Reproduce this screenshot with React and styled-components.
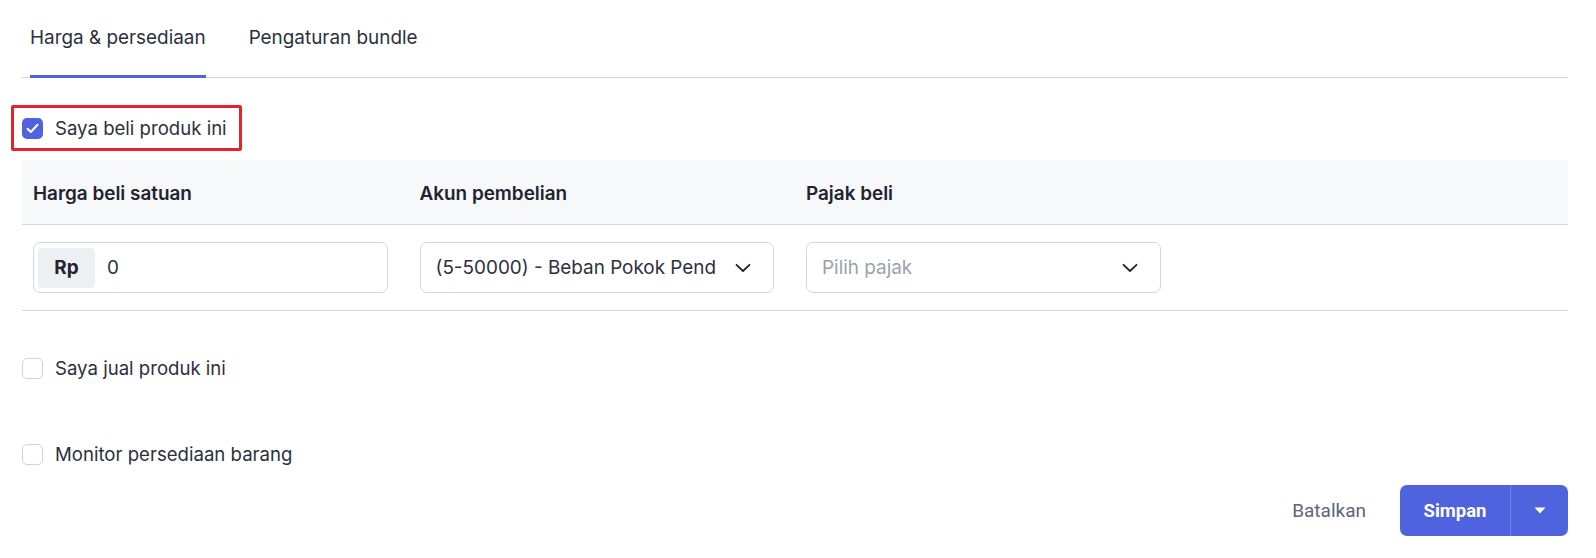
import React from "react";
import styled, { createGlobalStyle } from "styled-components";

const BLUE = "#4e63dd";
const TEXT = "#2b313c";
const LINE = "#d3d8e0";
const FS = "18.9px";

const GlobalStyle = createGlobalStyle`
  body {
    margin: 0;
    background: #ffffff;
    font-family: Inter, "Noto Sans", "Liberation Sans", sans-serif;
    color: ${TEXT};
  }
`;

const Chevron = () => (
  <svg width="16" height="10" viewBox="0 0 16 10" fill="none">
    <path d="M1.5 1.8 L8 8 L14.5 1.8" stroke="#1f2430" strokeWidth="1.8" strokeLinecap="round" strokeLinejoin="round" />
  </svg>
);

const Check = () => (
  <svg width="13" height="11" viewBox="0 0 13 11" fill="none">
    <path d="M1.5 5.8 L4.8 9 L11.5 1.8" stroke="#fff" strokeWidth="2" strokeLinecap="round" strokeLinejoin="round" />
  </svg>
);

const App = () => {
  return (
    <>
      <GlobalStyle />
      <Page>
        <Tabs>
          <Tab active>Harga &amp; persediaan</Tab>
          <Tab>Pengaturan bundle</Tab>
        </Tabs>

        <Highlight>
          <CheckBox checked>
            <Check />
          </CheckBox>
          <CheckLabel>Saya beli produk ini</CheckLabel>
        </Highlight>

        <Table>
          <HeadRow>
            <HeadCell>Harga beli satuan</HeadCell>
            <HeadCell>Akun pembelian</HeadCell>
            <HeadCell>Pajak beli</HeadCell>
            <HeadCell />
          </HeadRow>
          <BodyRow>
            <Cell>
              <Field>
                <Addon>Rp</Addon>
                <FieldText>0</FieldText>
              </Field>
            </Cell>
            <Cell>
              <Field>
                <FieldText>(5-50000) - Beban Pokok Pend</FieldText>
                <Chevron />
              </Field>
            </Cell>
            <Cell>
              <Field>
                <FieldText placeholder>Pilih pajak</FieldText>
                <Chevron />
              </Field>
            </Cell>
            <Cell />
          </BodyRow>
        </Table>

        <OptionRow top={45}>
          <CheckBox />
          <CheckLabel>Saya jual produk ini</CheckLabel>
        </OptionRow>
        <OptionRow top={62}>
          <CheckBox />
          <CheckLabel>Monitor persediaan barang</CheckLabel>
        </OptionRow>

        <Footer>
          <CancelButton>Batalkan</CancelButton>
          <SplitButton>
            <SaveButton>Simpan</SaveButton>
            <CaretButton>
              <svg width="12" height="7" viewBox="0 0 12 7">
                <path d="M0.5 0.5 L11.5 0.5 L6 6.5 Z" fill="#fff" />
              </svg>
            </CaretButton>
          </SplitButton>
        </Footer>
      </Page>
    </>
  );
};

export default App;

const Page = styled.div`
  width: 1546px;
  padding: 0 28px 0 22px;
  display: flex;
  flex-direction: column;
`;

const Tabs = styled.div`
  display: flex;
  align-items: flex-end;
  gap: 43px;
  height: 77px;
  padding-left: 8px;
  border-bottom: 1px solid ${LINE};
`;

const Tab = styled.div`
  display: flex;
  align-items: center;
  height: 78px;
  margin-bottom: -1px;
  padding-bottom: 1px;
  box-sizing: border-box;
  font-size: ${FS};
  color: ${TEXT};
  border-bottom: 3px solid ${(p) => (p.active ? BLUE : "transparent")};
`;

const Highlight = styled.div`
  display: flex;
  align-items: center;
  gap: 12px;
  align-self: flex-start;
  margin: 27px 0 0 -11px;
  height: 46px;
  box-sizing: border-box;
  padding: 0 12px 0 8px;
  border: 3px solid #e8222b;
  border-radius: 2px;
`;

const CheckBox = styled.div`
  width: 21px;
  height: 21px;
  box-sizing: border-box;
  border-radius: 5px;
  display: flex;
  align-items: center;
  justify-content: center;
  background: ${(p) => (p.checked ? BLUE : "#fff")};
  border: ${(p) => (p.checked ? "none" : "1.5px solid #cfd5de")};
`;

const CheckLabel = styled.span`
  font-size: 18.6px;
  color: ${TEXT};
`;

const Table = styled.div`
  margin-top: 9px;
  display: flex;
  flex-direction: column;
`;

const HeadRow = styled.div`
  display: grid;
  grid-template-columns: repeat(4, 1fr);
  height: 64px;
  background: #f7f8fa;
  border-bottom: 1px solid ${LINE};
`;

const HeadCell = styled.div`
  display: flex;
  align-items: center;
  padding: 3px 21px 0 11px;
  font-size: ${FS};
  font-weight: 600;
  color: #1f2430;
`;

const BodyRow = styled.div`
  display: grid;
  grid-template-columns: repeat(4, 1fr);
  height: 85px;
  border-bottom: 1px solid ${LINE};
`;

const Cell = styled.div`
  display: flex;
  align-items: center;
  padding: 0 21px 0 11px;
`;

const Field = styled.div`
  flex: 1;
  height: 51px;
  box-sizing: border-box;
  border: 1px solid #d2d7df;
  border-radius: 7px;
  display: flex;
  align-items: center;
  padding: 0 22px 0 4px;
  gap: 12px;

  & > span:first-child {
    padding-left: 11px;
  }
`;

const Addon = styled.div`
  width: 57px;
  height: 40px;
  border-radius: 4px;
  background: #edf0f3;
  display: flex;
  align-items: center;
  justify-content: center;
  font-size: ${FS};
  font-weight: 700;
  color: #1f2430;
`;

const FieldText = styled.span`
  flex: 1;
  font-size: ${FS};
  white-space: nowrap;
  overflow: hidden;
  color: ${(p) => (p.placeholder ? "#9aa1ad" : TEXT)};
`;

const OptionRow = styled.div`
  display: flex;
  align-items: center;
  gap: 12px;
  height: 24px;
  margin-top: ${(p) => p.top}px;
`;

const Footer = styled.div`
  display: flex;
  justify-content: flex-end;
  align-items: center;
  gap: 34px;
  margin-top: 19px;
`;

const CancelButton = styled.div`
  font-family: Roboto, "Liberation Sans", sans-serif;
  font-size: 19px;
  color: #5b6677;
`;

const SplitButton = styled.div`
  display: flex;
  height: 51px;
  border-radius: 7px;
  background: ${BLUE};
  overflow: hidden;
`;

const SaveButton = styled.div`
  width: 110px;
  display: flex;
  align-items: center;
  justify-content: center;
  color: #fff;
  font-family: Roboto, "Liberation Sans", sans-serif;
  font-size: 18.5px;
  font-weight: 700;
  border-right: 1px solid #7384e6;
`;

const CaretButton = styled.div`
  width: 57px;
  display: flex;
  align-items: center;
  justify-content: center;
`;
